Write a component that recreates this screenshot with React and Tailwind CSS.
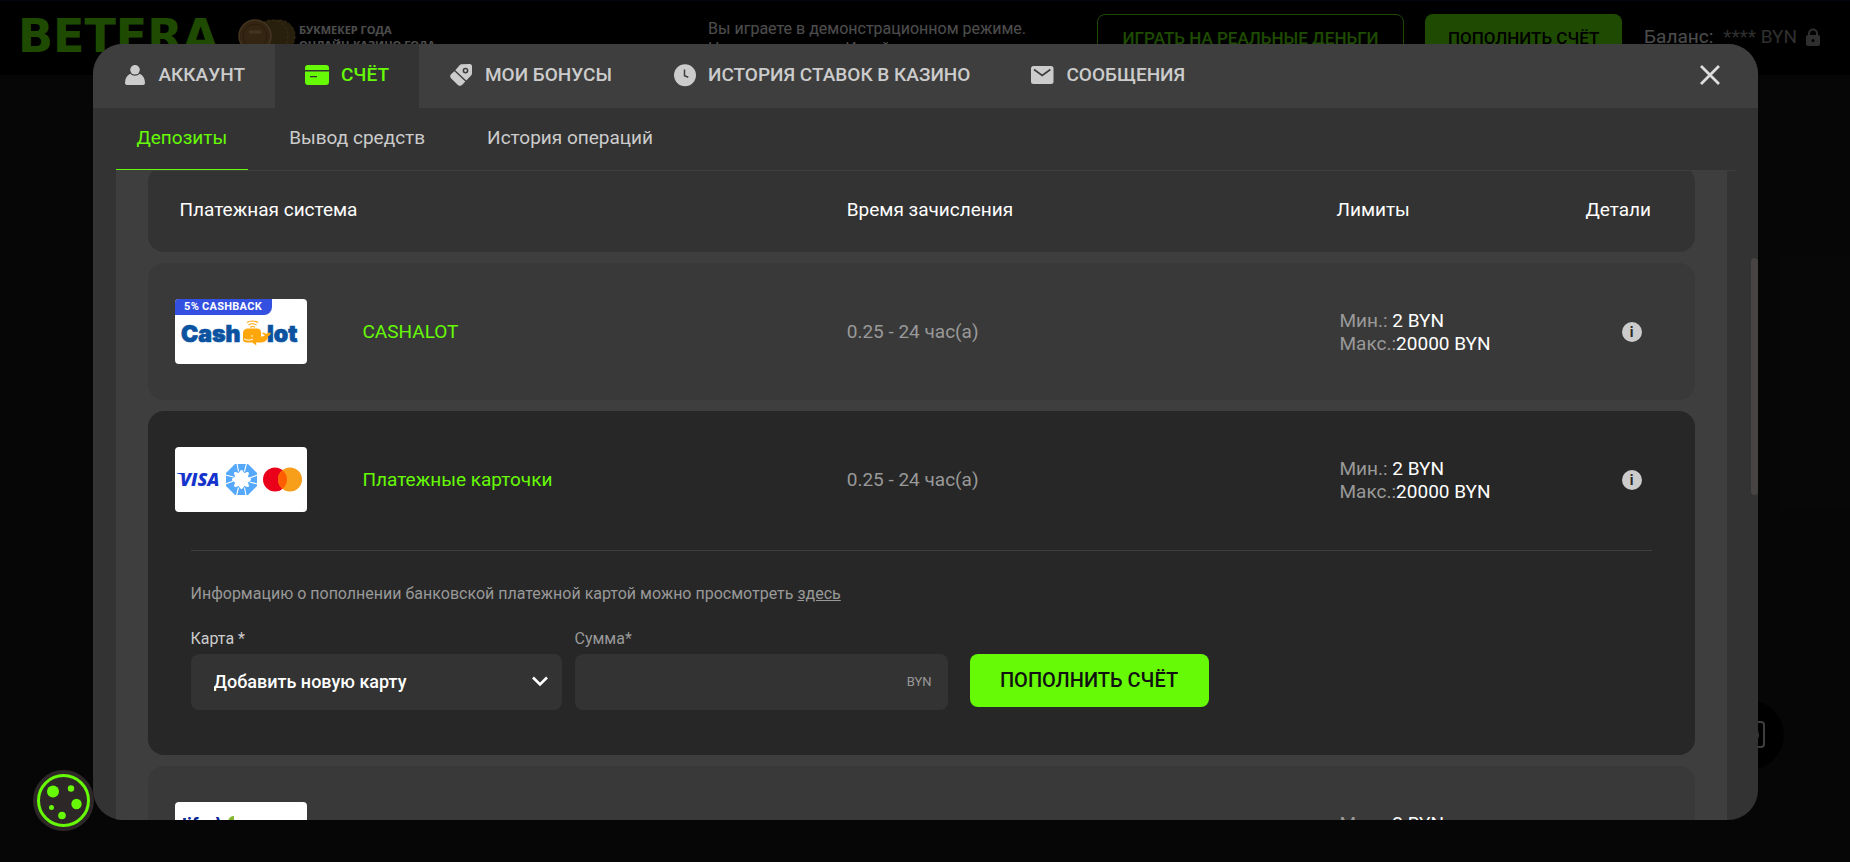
import React, { useState } from 'react';

const UserIcon = () => (
    <svg viewBox="0 0 24 24" className="w-6 h-6" fill="currentColor" aria-hidden="true">
        <circle cx="12" cy="6.8" r="4.8" />
        <path d="M2 20c0-4.600 2-7.600 5.200-9.200 1.300 1.200 2.900 1.900 4.800 1.900s3.500-.7 4.800-1.900C20 12.400 22 15.400 22 20c0 1.300-.8 2-2 2H4c-1.200 0-2-.7-2-2z" />
    </svg>
);

const CardIcon = () => (
    <svg viewBox="0 0 24 24" className="w-6 h-6" fill="currentColor" aria-hidden="true">
        <path d="M3 2h18a3 3 0 0 1 3 3v2H0V5a3 3 0 0 1 3-3z" />
        <path fillRule="evenodd" d="M0 8.500h24V19a3 3 0 0 1-3 3H3a3 3 0 0 1-3-3zM5 13v1.200h7V13z" />
    </svg>
);

const TagIcon = () => (
    <svg viewBox="0 0 24 24" className="w-6 h-6" fill="currentColor" aria-hidden="true">
        <path fillRule="evenodd" d="M12.600 1.300 20.500 1A2.500 2.500 0 0 1 23 3.600v6.700c0 .8-.3 1.500-.9 2.100l-4.800 5.100L6.300 7.200l4.300-5c.5-.6 1.200-.9 2-.9zM16.500 4.700a2.900 2.900 0 1 0 0 5.800 2.900 2.900 0 0 0 0-5.800zm0 1.500a1.400 1.400 0 1 1 0 2.800 1.400 1.400 0 0 1 0-2.800z" />
        <path d="m5.400 8.300 10.900 10.300-3 3.200c-1.200 1.300-3.100 1.300-4.400.1l-6.700-6.500c-1.300-1.200-1.300-3-.2-4.200z" />
    </svg>
);

const ClockIcon = () => (
    <svg viewBox="0 0 24 24" className="w-6 h-6" aria-hidden="true">
        <circle cx="13" cy="12.200" r="11" fill="currentColor" />
        <path d="M12.500 6.500v6.300l3.800 1.400" fill="none" stroke="#3e3e3e" strokeWidth="1.500" />
    </svg>
);

const MailIcon = () => (
    <svg viewBox="0 0 24 24" className="w-6 h-6" aria-hidden="true">
        <rect x="1" y="3" width="22.500" height="18" rx="2.500" fill="currentColor" />
        <path d="m4 6.500 8.200 6 8.200-6" fill="none" stroke="#3e3e3e" strokeWidth="1.700" />
    </svg>
);

const CashalotLogo = () => (
    <svg viewBox="0 0 132 65" className="w-[132px] h-[65px]" role="img" aria-label="Cashalot">
        <text x="6" y="43" fontFamily="Inter" fontWeight="900" fontSize="23" fill="#0b53a0" stroke="#0b53a0" strokeWidth=".7">Cash</text>
        <text x="92" y="43" fontFamily="Inter" fontWeight="900" fontSize="23" fill="#0b53a0" stroke="#0b53a0" strokeWidth=".7">lot</text>
        <path d="M68 40v-6c0-3 2-4.500 5-4.500h9c2.500 0 4 1.500 4 4v4c1.500 0 3-.7 4-1.600-1.600-.4-2.600-1-3-2.200 2 .1 3.300.4 4.200 1.400.8-1.200 2.200-1.600 4.800-1.300-.5 2-1.500 2.900-3 3.300-.2 4-3 6.400-7 6.400h-5l.4 3-4-3H72c-2.500 0-4-1-4-2.500z" fill="#ffa60a" />
        <path d="M69 40c3 1.500 6.500 1.500 9 0" fill="none" stroke="#fff" strokeWidth="1" />
        <circle cx="77" cy="37" r=".8" fill="#fff" />
        <path d="M72 23.500c3-2 8-2 11 0M73.500 26c2.500-1.500 5.500-1.500 8 0M75 28.300c1.500-.9 3.500-.9 5 0" fill="none" stroke="#ffa60a" strokeWidth="1.100" />
    </svg>
);

const CardsLogo = () => (
    <svg viewBox="0 0 132 65" className="w-[132px] h-[65px]" role="img" aria-label="Visa, Белкарт, Mastercard">
        <path d="M2 26h6l2 3.500C8 27.800 5 27 2 26.600z" fill="#1434cb" />
        <text x="5" y="39" fontFamily="Open Sans" fontWeight="800" fontStyle="italic" fontSize="18" fill="#1434cb">VISA</text>
        <polygon points="60,17 73,17 82,26 82,39 73,48 60,48 51,39 51,26" fill="#56a8fa" />
        <polygon points="66.5,24.500 69,28 72.500,26.500 71,30 74.500,32.500 71,35 72.500,38.500 69,37 66.500,40.500 64,37 60.500,38.500 62,35 58.500,32.500 62,30 60.500,26.500 64,28" fill="#fff" stroke="#fff" strokeWidth="3" strokeLinejoin="round" />
        <path d="m62 16.500 1.500 8M71.500 16.500l-2 8M82.500 28l-8 3M82.500 37l-8-2M71 48.500l-1.500-8M61.500 48.500l2-8M50.500 37l8-3M50.500 28l8 2" stroke="#fff" strokeWidth="1.100" />
        <circle cx="100" cy="32.500" r="12" fill="#eb001b" />
        <circle cx="115" cy="32.500" r="12" fill="#f79e1b" />
        <path d="M107.500 23.130a12 12 0 0 1 0 18.740a12 12 0 0 1 0-18.740z" fill="#ff5f00" />
    </svg>
);

const LifeLogo = () => (
    <svg viewBox="0 0 132 65" className="w-[132px] h-[65px]" role="img" aria-label="life:)">
        <text x="7" y="29" fontFamily="Inter" fontWeight="700" fontSize="18" fill="#0a2896">life:)</text>
        <path d="M53 21c0-4 2-7 6-7v6c0 4-2 6-6 6z" fill="#84b62e" />
    </svg>
);

const tabs = [
    { id: 'account', label: 'АККАУНТ', icon: UserIcon },
    { id: 'wallet', label: 'СЧЁТ', icon: CardIcon },
    { id: 'bonuses', label: 'МОИ БОНУСЫ', icon: TagIcon },
    { id: 'history', label: 'ИСТОРИЯ СТАВОК В КАЗИНО', icon: ClockIcon },
    { id: 'messages', label: 'СООБЩЕНИЯ', icon: MailIcon },
];

const subTabs = ['Депозиты', 'Вывод средств', 'История операций'];

const systems = [
    { id: 'cashalot', name: 'CASHALOT', logo: CashalotLogo, badge: '5% CASHBACK' },
    { id: 'cards', name: 'Платежные карточки', logo: CardsLogo },
    { id: 'life', name: 'life:)', logo: LifeLogo },
];

const Header = () => (
    <header className="flex items-start h-[75px] bg-black border-t border-[#08142c] text-white overflow-hidden">
        <a href="#" className="ml-[18px] mt-[11px] w-[208px] shrink-0 font-['DejaVu_Sans'] font-bold text-[46px] leading-[48px] text-[#66fa06]">BETERA</a>
        <svg viewBox="0 0 58 40" className="ml-3 mt-[18px] w-[58px] h-10" aria-hidden="true">
            <circle cx="41" cy="17" r="16" fill="#8a6a2c" stroke="#c39a4c" strokeDasharray="3 2" />
            <circle cx="34" cy="17" r="16" fill="#8a6a2c" stroke="#c39a4c" strokeDasharray="3 2" />
            <circle cx="17" cy="17" r="16" fill="#b0793c" stroke="#e0b070" strokeWidth="1.500" />
            <circle cx="17" cy="17" r="12" fill="none" stroke="#8a5a28" />
            <path d="M11 13h12" stroke="#e0b070" strokeWidth="3" />
        </svg>
        <p className="ml-[3px] mt-[21px] font-['Open_Sans'] font-bold text-[11px] leading-[15px] whitespace-nowrap">
            БУКМЕКЕР ГОДА<br />ОНЛАЙН-КАЗИНО ГОДА
        </p>
        <p className="ml-auto mt-[18px] w-[368px] text-[16px] leading-[20px] whitespace-nowrap">
            Вы играете в демонстрационном режиме.<br />На игровом счету Играйте
        </p>
        <button className="ml-[21px] mt-[13px] h-[50px] w-[307px] shrink-0 border border-[#66fa06] rounded-lg text-[#66fa06] text-[17px] font-medium">ИГРАТЬ НА РЕАЛЬНЫЕ ДЕНЬГИ</button>
        <button className="ml-[21px] mt-[13px] h-[50px] w-[197px] shrink-0 bg-[#66fa06] rounded-lg text-black text-[17px] font-medium">ПОПОЛНИТЬ СЧЁТ</button>
        <div className="ml-[22px] mr-[29px] mt-6 flex items-center text-[19px] leading-[24px] whitespace-nowrap">
            Баланс:
            <span className="ml-[10px] text-[#9d9d9d]">**** BYN</span>
            <svg viewBox="0 0 16 18" className="ml-2 w-4 h-[18px] text-[#9d9d9d]" aria-hidden="true">
                <path d="M4 8V5.500a4 4 0 0 1 8 0V8" fill="none" stroke="currentColor" strokeWidth="2" />
                <rect x="1" y="7" width="14" height="11" rx="2" fill="currentColor" />
                <circle cx="8" cy="12.500" r="1.500" fill="#000" />
            </svg>
        </div>
    </header>
);

const SystemRow = ({ system, open }) => {
    const Logo = system.logo;
    const bg = open ? 'bg-[#272727]' : 'bg-[#393939]';
    return (
        <tr className="h-[137px]">
            <td className={`${bg} pl-[27px] rounded-tl-2xl ${open ? '' : 'rounded-bl-2xl'}`}>
                <div className="relative w-[132px] h-[65px] bg-white rounded overflow-hidden">
                    <Logo />
                    {system.badge && (
                        <span className="absolute left-0 top-0 w-[97px] h-4 bg-[#3450e0] rounded-br-lg text-white text-center text-[11px] leading-4 font-bold tracking-wide">{system.badge}</span>
                    )}
                </div>
            </td>
            <td className={`${bg} text-[#66fa06]`}>{system.name}</td>
            <td className={`${bg} text-[#999999]`}>0.25 - 24 час(а)</td>
            <td className={`${bg} pl-[3px] text-[#999999]`}>
                <div>Мин.: <span className="text-white">2 BYN</span></div>
                <div>Макс.:<span className="text-white">20000 BYN</span></div>
            </td>
            <td className={`${bg} pr-[53px] rounded-tr-2xl ${open ? '' : 'rounded-br-2xl'}`}>
                <button aria-label="Детали" className="ml-auto flex items-center justify-center w-5 h-5 rounded-full bg-[#cccccc] text-[#272727] text-[14px] leading-5 font-bold">i</button>
            </td>
        </tr>
    );
};

const DepositForm = () => {
    const [amount, setAmount] = useState('');

    return (
        <form className="mx-[43px] pt-7 pb-[45px] mt-[2px] border-t border-[#3e3e3e]" onSubmit={(e) => e.preventDefault()}>
            <p className="text-[16px] leading-[30px] text-[#999999]">
                Информацию о пополнении банковской платежной картой можно просмотреть <a href="#" className="underline">здесь</a>
            </p>
            <div className="flex items-start mt-[19px]">
                <div className="w-[371px]">
                    <label htmlFor="card" className="block mb-1 text-[16px] leading-[22px] text-[#cccccc]">Карта *</label>
                    <div className="relative">
                        <select id="card" className="appearance-none block w-full h-14 pl-[23px] pr-10 pb-[2px] rounded-lg bg-[#333333] text-white text-[18px] font-medium">
                            <option>Добавить новую карту</option>
                        </select>
                        <svg viewBox="0 0 18 11" className="absolute right-[13px] top-[22px] w-[18px] h-[11px] pointer-events-none" aria-hidden="true">
                            <path d="m2 1.500 7 7 7-7" fill="none" stroke="#fff" strokeWidth="2.600" />
                        </svg>
                    </div>
                </div>
                <div className="ml-[13px] w-[373px]">
                    <label htmlFor="amount" className="block mb-1 text-[16px] leading-[22px] text-[#999999]">Сумма*</label>
                    <div className="flex items-center h-14 pr-4 pb-[2px] rounded-lg bg-[#333333]">
                        <input
                            id="amount"
                            type="text"
                            value={amount}
                            onChange={(e) => setAmount(e.target.value)}
                            className="flex-1 min-w-0 h-full pl-[23px] bg-transparent text-white text-[18px] outline-none"
                        />
                        <span className="text-[13px] text-[#999999]">BYN</span>
                    </div>
                </div>
                <button type="submit" className="ml-[22px] mt-[26px] w-[239px] h-[53px] rounded-lg bg-[#66fa06] text-[#111111] text-[20px] font-medium">ПОПОЛНИТЬ СЧЁТ</button>
            </div>
        </form>
    );
};

const Spacer = () => <tr className="h-[11px]" aria-hidden="true"><td colSpan={5}></td></tr>;

const DepositTable = () => (
    <table className="table-fixed w-full -mt-[5px] border-separate border-spacing-0 text-[19px] leading-[23px] text-left">
        <colgroup>
            <col className="w-[215px]" />
            <col className="w-[31.3%]" />
            <col />
            <col className="w-[249px]" />
            <col className="w-[109px]" />
        </colgroup>
        <thead className="text-white">
            <tr className="h-[86px]">
                <th colSpan={2} className="pl-8 font-normal bg-[#333333] rounded-l-2xl">Платежная система</th>
                <th className="font-normal bg-[#333333]">Время зачисления</th>
                <th className="font-normal bg-[#333333]">Лимиты</th>
                <th className="font-normal bg-[#333333] rounded-r-2xl">Детали</th>
            </tr>
        </thead>
        {systems.map((s) => {
            const open = s.id === 'cards';
            return (
                <tbody key={s.id}>
                    <Spacer />
                    <SystemRow system={s} open={open} />
                    {open && (
                        <tr>
                            <td colSpan={5} className="bg-[#272727] rounded-b-2xl">
                                <DepositForm />
                            </td>
                        </tr>
                    )}
                </tbody>
            );
        })}
    </table>
);

const AccountModal = () => {
    const [tab, setTab] = useState('wallet');
    const [subTab, setSubTab] = useState('Депозиты');

    return (
        <div role="dialog" aria-label="Счёт" className="relative flex flex-col w-[90%] h-full rounded-[30px] overflow-hidden bg-[#333333]">
            <div className="flex shrink-0 h-16 bg-[#3e3e3e] text-[#cccccc]">
                {tabs.map(({ id, label, icon: Icon }) => (
                    <button
                        key={id}
                        onClick={() => setTab(id)}
                        className={`flex items-center gap-3 px-[30px] pb-[2px] text-[19px] font-medium whitespace-nowrap ${tab === id ? 'bg-[#333333] text-[#66fa06]' : ''}`}
                    >
                        <Icon />
                        {label}
                    </button>
                ))}
                <button aria-label="Закрыть" className="ml-auto mr-9 pb-[2px]">
                    <svg viewBox="0 0 24 24" className="w-6 h-6" aria-hidden="true">
                        <path d="m3 3 18 18M21 3 3 21" fill="none" stroke="#dddddd" strokeWidth="2.800" />
                    </svg>
                </button>
            </div>
            <nav className="flex shrink-0 gap-5 h-[63px] mx-[23px] border-b border-[#3e3e3e] text-[19px] text-[#cccccc]">
                {subTabs.map((t) => (
                    <button
                        key={t}
                        onClick={() => setSubTab(t)}
                        className={`px-[21px] pb-[1px] border-b ${subTab === t ? 'border-[#66fa06] text-[#66fa06]' : 'border-transparent'}`}
                    >
                        {t}
                    </button>
                ))}
            </nav>
            <div className="flex-1 min-h-0 ml-[23px] mr-[31px] px-8 bg-[#3e3e3e] overflow-hidden">
                <DepositTable />
            </div>
            <div className="absolute right-0 top-[214px] w-[7px] h-[237px] rounded bg-[#474443]"></div>
        </div>
    );
};

export default function App() {
    return (
        <div className="relative h-screen overflow-hidden bg-[#171717] font-[Roboto,sans-serif]">
            <Header />
            <button aria-label="Чат" className="absolute right-[66px] bottom-[92px] flex items-center justify-center w-[70px] h-[70px] rounded-full bg-black">
                <svg viewBox="0 0 32 28" className="w-8 h-7" fill="none" stroke="#d0d0d0" strokeWidth="2" aria-hidden="true">
                    <rect x="1" y="1" width="30" height="25" rx="3" />
                    <circle cx="19" cy="14" r="6" />
                </svg>
            </button>
            <div className="absolute inset-0 flex justify-center pt-11 pb-[42px] bg-black/70">
                <AccountModal />
            </div>
            <button aria-label="Настройки cookie" className="absolute left-[33px] bottom-[31px]">
                <svg viewBox="0 0 61 61" className="block w-[61px] h-[61px]" fill="#66fa06" aria-hidden="true">
                    <circle cx="30.500" cy="30.500" r="30.500" fill="#2d2827" />
                    <circle cx="30.500" cy="30.500" r="25" fill="none" stroke="#66fa06" strokeWidth="3" />
                    <circle cx="20" cy="21.500" r="6" />
                    <circle cx="38" cy="18.500" r="3.200" />
                    <circle cx="43.500" cy="34" r="5.200" />
                    <circle cx="29" cy="45.500" r="3.800" />
                    <circle cx="18.500" cy="37.500" r="2.500" />
                </svg>
            </button>
        </div>
    );
}
